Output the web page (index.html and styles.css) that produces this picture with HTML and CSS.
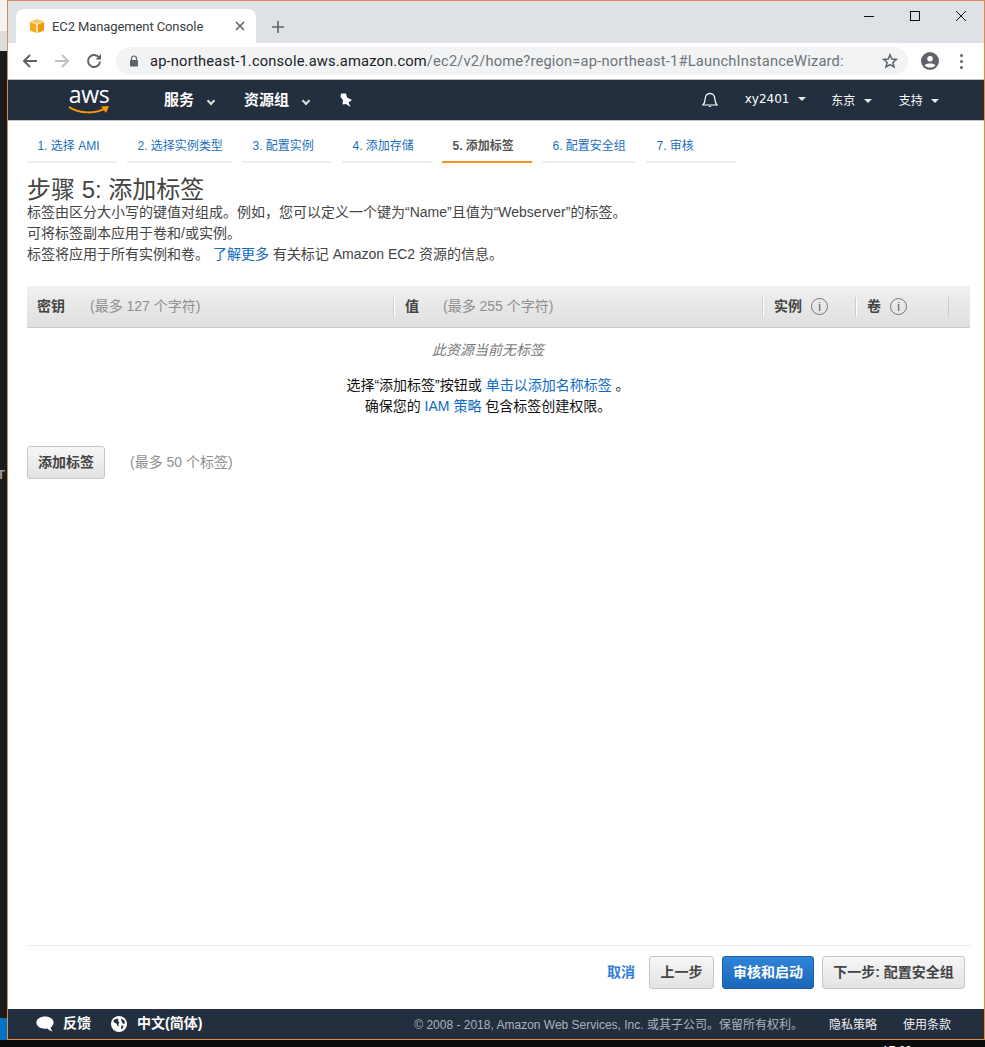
FILE: index.html
```html
<!DOCTYPE html>
<html lang="zh-CN">
<head>
<meta charset="UTF-8">
<title>EC2 Management Console</title>
<link rel="stylesheet" href="styles.css">
</head>
<body>
<div class="desk">
    <div class="edge">
        <div class="edge-white"></div>
        <div class="edge-gray"></div>
        <div class="edge-dark"><span class="edge-t">T</span></div>
        <div class="edge-blue"></div>
    </div>
    <div class="window">
        <!-- browser tabs -->
        <div class="tabstrip">
            <div class="tab">
                <svg class="favicon" viewBox="0 0 16 16" width="16" height="16">
                    <path d="M8 1 L15 3.5 L8 6 L1 3.5 Z" fill="#f7c768"/>
                    <path d="M1 4 L7.4 6.4 V15 L1 12.6 Z" fill="#f4a81d"/>
                    <path d="M15 4 L8.6 6.4 V15 L15 12.6 Z" fill="#eb9a0e"/>
                </svg>
                <span class="tab-title">EC2 Management Console</span>
                <svg class="tab-close" viewBox="0 0 10 10" width="10" height="10">
                    <path d="M1 1 L9 9 M9 1 L1 9" stroke="#5f6368" stroke-width="1.6"/>
                </svg>
            </div>
            <svg class="new-tab" viewBox="0 0 12 12" width="12" height="12">
                <path d="M6 0 V12 M0 6 H12" stroke="#5f6368" stroke-width="1.6"/>
            </svg>
            <div class="win-buttons">
                <svg viewBox="0 0 10 10" width="10" height="10"><path d="M0 5.5 H10" stroke="#111" stroke-width="1"/></svg>
                <svg viewBox="0 0 10 10" width="10" height="10"><rect x="0.5" y="0.5" width="9" height="9" fill="none" stroke="#111"/></svg>
                <svg viewBox="0 0 10 10" width="10" height="10"><path d="M0 0 L10 10 M10 0 L0 10" stroke="#111" stroke-width="1"/></svg>
            </div>
        </div>

        <!-- address bar -->
        <div class="toolbar">
            <svg class="tool-icon" viewBox="0 0 16 16" width="16" height="16">
                <path d="M15 8 H2 M8 2 L2 8 L8 14" fill="none" stroke="#5f6368" stroke-width="2"/>
            </svg>
            <svg class="tool-icon" viewBox="0 0 16 16" width="16" height="16">
                <path d="M1 8 H14 M8 2 L14 8 L8 14" fill="none" stroke="#bdc1c6" stroke-width="2"/>
            </svg>
            <svg class="tool-icon" viewBox="0 0 16 16" width="16" height="16">
                <path d="M13.2 5 A6 6 0 1 0 14 8.5" fill="none" stroke="#5f6368" stroke-width="2"/>
                <path d="M15 1 V6.5 H9.5 Z" fill="#5f6368"/>
            </svg>
            <div class="omnibox">
                <svg class="lock" viewBox="0 0 10 12" width="10" height="12">
                    <path d="M2.5 5 V3.5 A2.5 2.5 0 0 1 7.5 3.5 V5" fill="none" stroke="#5f6368" stroke-width="1.2"/>
                    <rect x="1" y="5" width="8" height="6.5" rx="0.8" fill="#5f6368"/>
                </svg>
                <span class="url"><b>ap-northeast-1.console.aws.amazon.com</b>/ec2/v2/home?region=ap-northeast-1#LaunchInstanceWizard:</span>
                <svg class="star" viewBox="0 0 16 16" width="16" height="16">
                    <path d="M8 1.8 L9.8 6 L14.4 6.4 L10.9 9.4 L12 13.9 L8 11.5 L4 13.9 L5.1 9.4 L1.6 6.4 L6.2 6 Z" fill="none" stroke="#5f6368" stroke-width="1.5"/>
                </svg>
            </div>
            <svg class="avatar" viewBox="0 0 18 18" width="18" height="18">
                <circle cx="9" cy="9" r="9" fill="#5f6368"/>
                <circle cx="9" cy="6.8" r="2.8" fill="#fff"/>
                <path d="M3.6 13.2 C5 10.8 13 10.8 14.4 13.2 C13 15 11 15.6 9 15.6 C7 15.6 5 15 3.6 13.2 Z" fill="#fff"/>
            </svg>
            <div class="kebab"><i></i><i></i><i></i></div>
        </div>

        <!-- aws header -->
        <div class="topnav">
            <div class="aws-logo">
                <span class="aws-word">aws</span>
                <svg class="aws-smile" viewBox="0 0 42 10" width="42" height="10">
                    <path d="M1 2 C11 9 28 9 38 3" fill="none" stroke="#f90" stroke-width="2"/>
                    <path d="M33 1.5 L41 1 L38 8 Z" fill="#f90"/>
                </svg>
            </div>
            <span class="nav-item nav-services">服务<i class="caret"></i></span>
            <span class="nav-item nav-groups">资源组<i class="caret"></i></span>
            <svg class="pin" viewBox="0 0 14 14" width="14" height="14">
                <path d="M2 0.5 L7 0.5 L8 4.5 L13 7 L9.5 9.5 L11.5 14 L7 11 L3.5 11.5 L4 7 L1.5 4 Z" fill="#fff"/>
            </svg>
            <div class="nav-right">
                <svg class="bell" viewBox="0 0 18 18" width="18" height="18">
                    <path d="M2 14 C4 12 4 10 4.2 7.6 C4.4 4.6 6.4 2.6 9 2.6 C11.6 2.6 13.6 4.6 13.8 7.6 C14 10 14 12 16 14 Z" fill="none" stroke="#fff" stroke-width="1.2"/>
                    <path d="M7.5 15 A1.6 1.6 0 0 0 10.5 15 Z M8.4 2 A0.6 0.6 0 0 1 9.6 2 V3 H8.4 Z" fill="#fff"/>
                </svg>
                <span class="nav-small nav-user">xy2401 <i class="caret small"></i></span>
                <span class="nav-small nav-region">东京 <i class="caret small"></i></span>
                <span class="nav-small">支持 <i class="caret small"></i></span>
            </div>
        </div>

        <div class="page">
            <!-- wizard steps -->
            <div class="steps">
                <a class="step w90">1. 选择 AMI</a>
                <a class="step w105">2. 选择实例类型</a>
                <a class="step w90">3. 配置实例</a>
                <a class="step w90">4. 添加存储</a>
                <a class="step w90 current">5. 添加标签</a>
                <a class="step w94">6. 配置安全组</a>
                <a class="step w90">7. 审核</a>
            </div>

            <div class="content">
                <h1>步骤 5: 添加标签</h1>
                <p>标签由区分大小写的键值对组成。例如，您可以定义一个键为“Name”且值为“Webserver”的标签。</p>
                <p>可将标签副本应用于卷和/或实例。</p>
                <p>标签将应用于所有实例和卷。 <a href="#">了解更多</a> 有关标记 Amazon EC2 资源的信息。</p>

                <div class="tag-head">
                    <div class="col col-key"><b>密钥</b><span class="limit">(最多 127 个字符)</span></div>
                    <div class="col col-value"><b>值</b><span class="limit">(最多 255 个字符)</span></div>
                    <div class="col col-inst"><b>实例</b><i class="info">i</i></div>
                    <div class="col col-vol"><b>卷</b><i class="info">i</i></div>
                </div>

                <div class="empty">
                    <div class="empty-title">此资源当前无标签</div>
                    <div class="empty-line">选择“添加标签”按钮或 <a href="#">单击以添加名称标签</a> 。</div>
                    <div class="empty-line">确保您的 <a href="#">IAM 策略</a> 包含标签创建权限。</div>
                </div>

                <div class="add-row">
                    <button class="btn btn-add">添加标签</button>
                    <span class="add-limit">(最多 50 个标签)</span>
                </div>
            </div>

            <div class="actions">
                <a class="cancel" href="#">取消</a>
                <button class="btn btn-prev">上一步</button>
                <button class="btn btn-blue">审核和启动</button>
                <button class="btn btn-next">下一步: 配置安全组</button>
            </div>
        </div>

        <!-- console footer -->
        <div class="footer">
            <svg class="foot-icon" viewBox="0 0 18 16" width="18" height="16">
                <path d="M9 0.5 C13.8 0.5 17.6 3 17.6 6.6 C17.6 9 16 10.8 14.6 11.6 C14.8 13 15.6 14.4 16.4 15.4 C14.4 15.2 12.6 14 11.4 12.6 C10.6 12.8 9.8 12.8 9 12.8 C4.2 12.8 0.4 10.2 0.4 6.6 C0.4 3 4.2 0.5 9 0.5 Z" fill="#fff"/>
            </svg>
            <span class="foot-strong foot-feedback">反馈</span>
            <svg class="foot-icon" viewBox="0 0 16 16" width="16" height="16">
                <circle cx="8" cy="8" r="8" fill="#fff"/>
                <path d="M2.5 4.6 C4 3 6 2.6 7.4 3 L7 5 L8.4 6.4 L7.2 8.4 L8 10.6 L6.4 10 L5.4 7.6 L3 6.6 Z M10 2.4 L13.4 4.4 L14 7.4 L12 7.8 L10.6 5.6 Z M10.4 9.6 L12.6 9.8 L11.6 12.6 L10 13 Z" fill="#232f3e"/>
            </svg>
            <span class="foot-strong foot-lang">中文(简体)</span>
            <div class="foot-right">
                <span class="copyright">© 2008 - 2018, Amazon Web Services, Inc. 或其子公司。保留所有权利。</span>
                <span class="foot-link foot-privacy">隐私策略</span>
                <span class="foot-link">使用条款</span>
            </div>
        </div>
    </div>
</div>
<div class="taskbar-edge"><span class="clock">17:20</span></div>
</body>
</html>
```

FILE: styles.css
```css
* {
    box-sizing: border-box;
}

html, body {
    margin: 0;
    height: 1047px;
    overflow: hidden;
    background: #0c0c0c;
}

body {
    font-family: "Liberation Sans", "Noto Sans CJK SC", Arial, sans-serif;
    font-size: 14px;
    color: #444;
}

a {
    color: #0f6bc4;
    text-decoration: none;
}

.desk {
    display: flex;
    height: 1040px;
}

/* sliver of the window behind */
.edge {
    width: 7px;
    display: flex;
    flex-direction: column;
    overflow: hidden;
}

.edge-white {
    height: 31px;
    background: #f4f4f4;
}

.edge-gray {
    height: 20px;
    background: #dcdcdc;
}

.edge-dark {
    flex: 1;
    background: #1b1b1b;
    padding-top: 417px;
}

.edge-t {
    display: block;
    margin-left: -3px;
    font-size: 13px;
    line-height: 14px;
    font-weight: 700;
    color: #999;
}

.edge-blue {
    height: 22px;
    background: #0074c2;
}

.window {
    flex: 1;
    display: flex;
    flex-direction: column;
    border: 1px solid #dd8a4e;
    background: #fff;
    min-width: 0;
}

.tabstrip {
    height: 42px;
    background: #dee1e6;
    display: flex;
    align-items: flex-end;
    padding-left: 8px;
    flex-shrink: 0;
}

.tab {
    width: 240px;
    height: 34px;
    background: #fff;
    border-radius: 8px 8px 0 0;
    display: flex;
    align-items: center;
    padding: 0 11px 0 13px;
}

.favicon {
    flex-shrink: 0;
}

.tab-title {
    margin-left: 7px;
    flex: 1;
    font-size: 13px;
    color: #3c4043;
    font-family: "Roboto", "Liberation Sans", sans-serif;
    letter-spacing: -0.1px;
}

.new-tab {
    margin: 0 0 10px 16px;
}

.win-buttons {
    margin-left: auto;
    align-self: flex-start;
    display: flex;
    gap: 36px;
    padding: 10px 18px 0 0;
}

.toolbar {
    height: 37px;
    flex-shrink: 0;
    display: flex;
    align-items: center;
    padding-left: 14px;
    border-bottom: 1px solid #bfbfbf;
}

.tool-icon {
    margin-right: 16px;
}

.toolbar .tool-icon:nth-child(3) {
    margin-right: 14px;
}

.omnibox {
    width: 792px;
    height: 28px;
    background: #f1f3f4;
    border-radius: 14px;
    display: flex;
    align-items: center;
    padding: 0 10px 0 13px;
    margin-top: -1px;
}

.lock {
    flex-shrink: 0;
}

.url {
    margin-left: 11px;
    flex: 1;
    white-space: nowrap;
    overflow: hidden;
    font-family: "Roboto", "Liberation Sans", sans-serif;
    font-size: 14.7px;
    color: #6f7378;
    letter-spacing: 0.17px;
}

.url b {
    font-weight: 400;
    color: #202124;
}

.star {
    flex-shrink: 0;
    margin-left: 8px;
}

.avatar {
    margin-left: 13px;
}

.kebab {
    margin-left: 21px;
    display: flex;
    flex-direction: column;
    gap: 3px;
}

.kebab i {
    display: block;
    width: 3px;
    height: 3px;
    border-radius: 50%;
    background: #5f6368;
}

.topnav {
    height: 41px;
    flex-shrink: 0;
    background: #232f3e;
    border-bottom: 1px solid #c4c4c4;
    display: flex;
    align-items: center;
    color: #fff;
    padding-left: 60px;
}

.aws-logo {
    width: 42px;
    height: 32px;
    display: flex;
    flex-direction: column;
    align-items: center;
    margin-top: -2px;
}

.aws-word {
    font-family: "Open Sans", "Liberation Sans", sans-serif;
    font-size: 23px;
    line-height: 22px;
    letter-spacing: -0.3px;
    height: 21px;
}

.aws-smile {
    margin-top: 1px;
}

.nav-item {
    font-size: 15px;
    font-weight: 700;
    white-space: nowrap;
    margin-bottom: 4px;
}

.nav-services {
    margin-left: 54px;
}

.nav-groups {
    margin-left: 30px;
}

.caret {
    display: inline-block;
    width: 6px;
    height: 6px;
    border-right: 2px solid #ddd;
    border-bottom: 2px solid #ddd;
    transform: rotate(45deg);
    margin: 0 0 1px 14px;
}

.caret.small {
    width: 0;
    height: 0;
    border: 4px solid transparent;
    border-top: 4px solid #e8e8e8;
    border-bottom: 0;
    transform: none;
    margin: 0 0 2px 5px;
}

.pin {
    margin-left: 30px;
}

.nav-right {
    margin-left: auto;
    display: flex;
    align-items: center;
    padding-right: 45px;
}

.nav-small {
    font-size: 12px;
    white-space: nowrap;
    margin-bottom: 2px;
}

.nav-user {
    margin-left: 26px;
    font-family: "DejaVu Sans", "Liberation Sans", sans-serif;
}

.nav-region {
    margin: 0 27px 2px 25px;
}

.page {
    flex: 1;
    display: flex;
    flex-direction: column;
    padding: 0 14px 0 19px;
    min-height: 0;
}

.steps {
    display: flex;
    gap: 10px;
    padding-top: 1px;
    height: 41px;
    flex-shrink: 0;
}

.step {
    height: 41px;
    border-bottom: 2px solid #eee;
    padding: 16px 0 0 10.5px;
    font-size: 12px;
    line-height: 17px;
    color: #1b6fbc;
    white-space: nowrap;
}

.w90 {
    width: 90px;
}

.w105 {
    width: 105px;
}

.w94 {
    width: 94px;
}

.step.current {
    border-bottom-color: #f7941d;
    color: #555;
    font-weight: 700;
}

.content {
    flex: 1;
}

h1 {
    margin: 14px 0 0;
    font-size: 24px;
    font-weight: 400;
    line-height: 28px;
    color: #444;
}

p {
    margin: 0;
    line-height: 21px;
    height: 21px;
    white-space: nowrap;
}

h1 + p {
    margin-top: -2px;
}

.tag-head {
    margin-top: 21px;
    height: 42px;
    display: flex;
    align-items: center;
    background: linear-gradient(#f0f0f0, #dfdfdf);
    border-bottom: 1px solid #cacaca;
}

.col {
    height: 20px;
    display: flex;
    align-items: center;
    white-space: nowrap;
    color: #444;
}

.col b {
    font-weight: 700;
    margin-bottom: 4px;
}

.col-key {
    width: 366px;
    padding-left: 10px;
}

.col-value {
    width: 369px;
    padding-left: 10px;
    border-left: 1px solid #fff;
    box-shadow: -1px 0 0 #ccc;
    margin-left: 1px;
}

.col-value .limit {
    margin-left: 24px;
}

.col-inst {
    width: 93px;
    padding-left: 10px;
    border-left: 1px solid #fff;
    box-shadow: -1px 0 0 #ccc;
}

.col-vol {
    width: 93px;
    padding-left: 10px;
    border-left: 1px solid #fff;
    border-right: 1px solid #ccc;
    box-shadow: -1px 0 0 #ccc;
}

.limit {
    margin-left: 25px;
    margin-bottom: 4px;
    color: #8f8f8f;
}

.info {
    display: flex;
    align-items: center;
    justify-content: center;
    width: 17px;
    height: 17px;
    margin-left: 9px;
    border: 1px solid #777;
    border-radius: 50%;
    font-style: normal;
    font-size: 12px;
    color: #555;
}

.empty {
    text-align: center;
    padding-right: 21px;
    color: #111;
}

.empty-title {
    margin-top: 12px;
    line-height: 21px;
    font-style: italic;
    color: #777;
    margin-bottom: 14px;
}

.empty-line {
    line-height: 21px;
}

.add-row {
    margin-top: 29px;
    display: flex;
    align-items: center;
}

.btn {
    height: 33px;
    border: 1px solid #c6c6c6;
    border-radius: 3px;
    background: linear-gradient(#f6f6f6, #e3e3e3);
    font-family: inherit;
    font-size: 14px;
    font-weight: 700;
    color: #444;
    padding: 0 0 4px;
    white-space: nowrap;
}

.btn-add {
    width: 78px;
}

.add-limit {
    margin-left: 25px;
    margin-bottom: 4px;
    color: #8f8f8f;
}

.actions {
    height: 64px;
    flex-shrink: 0;
    display: flex;
    justify-content: flex-end;
    align-items: flex-start;
    gap: 8px;
    padding: 10px 5px 0 0;
    border-top: 1px solid #eaeaea;
}

.cancel {
    font-weight: 700;
    line-height: 33px;
    color: #2f7ed8;
    margin-right: 6px;
}

.btn-prev {
    width: 65px;
}

.btn-blue {
    width: 92px;
    background: linear-gradient(#2f84d8, #1a66b8);
    border-color: #1a5fa8;
    color: #fff;
}

.btn-next {
    width: 143px;
}

.footer {
    height: 30px;
    flex-shrink: 0;
    background: #232f3e;
    display: flex;
    align-items: center;
    padding-left: 28px;
    color: #fff;
}

.foot-strong {
    font-weight: 700;
    white-space: nowrap;
    margin-left: 9px;
    margin-bottom: 4px;
}

.foot-feedback {
    margin-right: 20px;
}

.foot-lang {
    margin-left: 10px;
}

.foot-right {
    margin-left: auto;
    margin-bottom: 2px;
    display: flex;
    align-items: center;
    padding-right: 33px;
    font-size: 12px;
    white-space: nowrap;
}

.copyright {
    color: #aab4be;
}

.foot-link {
    color: #eef2f5;
}

.foot-privacy {
    margin: 0 26px 0 26px;
}

.taskbar-edge {
    height: 7px;
    background: #0c0c0c;
    overflow: hidden;
    padding-left: 882px;
}

.clock {
    display: block;
    margin-top: 4px;
    font-size: 12px;
    line-height: 14px;
    color: #fff;
}
```
